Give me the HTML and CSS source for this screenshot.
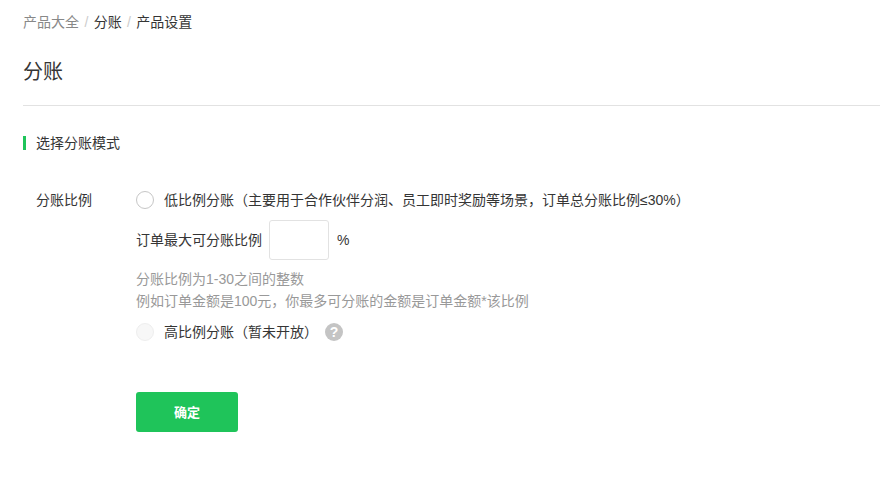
FILE: index.html
```html
<!DOCTYPE html>
<html lang="zh-CN">
<head>
<meta charset="utf-8">
<title>分账</title>
<link rel="stylesheet" href="styles.css">
</head>
<body>
<nav class="crumbs"><span class="crumb-link">产品大全</span><span class="sep">/</span><span>分账</span><span class="sep">/</span><span>产品设置</span></nav>
<h1 class="title">分账</h1>
<h2 class="section">选择分账模式</h2>
<form class="form">
  <div class="label">分账比例</div>
  <div class="fields">
    <div class="radio-row"><span class="radio"></span><span>低比例分账（主要用于合作伙伴分润、员工即时奖励等场景，订单总分账比例≤30%）</span></div>
    <div class="ratio-row"><span>订单最大可分账比例</span><input class="ratio-input" type="text"><span class="unit">%</span></div>
    <div class="hint">分账比例为1-30之间的整数<br>例如订单金额是100元，你最多可分账的金额是订单金额*该比例</div>
    <div class="radio-row second"><span class="radio disabled"></span><span>高比例分账（暂未开放）</span><span class="help">?</span></div>
    <button class="submit" type="button">确定</button>
  </div>
</form>
</body>
</html>
```
FILE: styles.css
```css
* { box-sizing: border-box; }
html, body { margin: 0; padding: 0; }
body {
  width: 880px;
  height: 477px;
  overflow: hidden;
  background: #fff;
  padding-left: 23px;
  font: 14px/20px "Liberation Sans", "Noto Sans CJK SC", sans-serif;
  color: #353535;
}
.crumbs { display: flex; padding-top: 12px; height: 32px; }
.crumb-link { color: #888; }
.sep { color: #ccc; margin: 0 5.4px; }
.title {
  margin: 0;
  padding: 26px 0 10px;
  height: 74px;
  border-bottom: 1px solid #e2e2e2;
  font-size: 20px;
  line-height: 28px;
  font-weight: 400;
  color: #353535;
}
.section {
  margin: 30px 0 0;
  height: 14px;
  border-left: 3px solid #1fc45a;
  padding-left: 10px;
  font-size: 14px;
  line-height: 14px;
  font-weight: 400;
}
.form { display: flex; margin-top: 40px; padding-left: 13px; }
.label { width: 100px; line-height: 20px; }
.fields { flex: 1; }
.radio-row { display: flex; align-items: center; height: 20px; }
.radio {
  width: 18px;
  height: 18px;
  border: 1px solid #c6c6c6;
  border-radius: 50%;
  margin-right: 10px;
  background: #fff;
}
.radio.disabled { background: #f7f7f7; border-color: #eee; }
.ratio-row { display: flex; align-items: center; margin-top: 10px; }
.ratio-input {
  width: 60px;
  height: 40px;
  margin: 0 8px 0 7px;
  border: 1px solid #e2e2e2;
  border-radius: 3px;
  background: #fff;
}
.unit { color: #353535; }
.hint { margin-top: 8px; color: #999; line-height: 22px; }
.second { margin-top: 10px; }
.help {
  width: 18px;
  height: 18px;
  margin-left: 7px;
  border-radius: 50%;
  background: #c4c4c4;
  color: #fff;
  font-size: 14px;
  font-weight: 700;
  line-height: 18px;
  text-align: center;
}
.submit {
  display: block;
  width: 102px;
  height: 40px;
  margin-top: 50px;
  padding: 0 0 2px;
  border: 0;
  border-radius: 3px;
  background: #1fc45a;
  color: #fff;
  font: 700 13px "Liberation Sans", "Noto Sans CJK SC", sans-serif;
}
```
